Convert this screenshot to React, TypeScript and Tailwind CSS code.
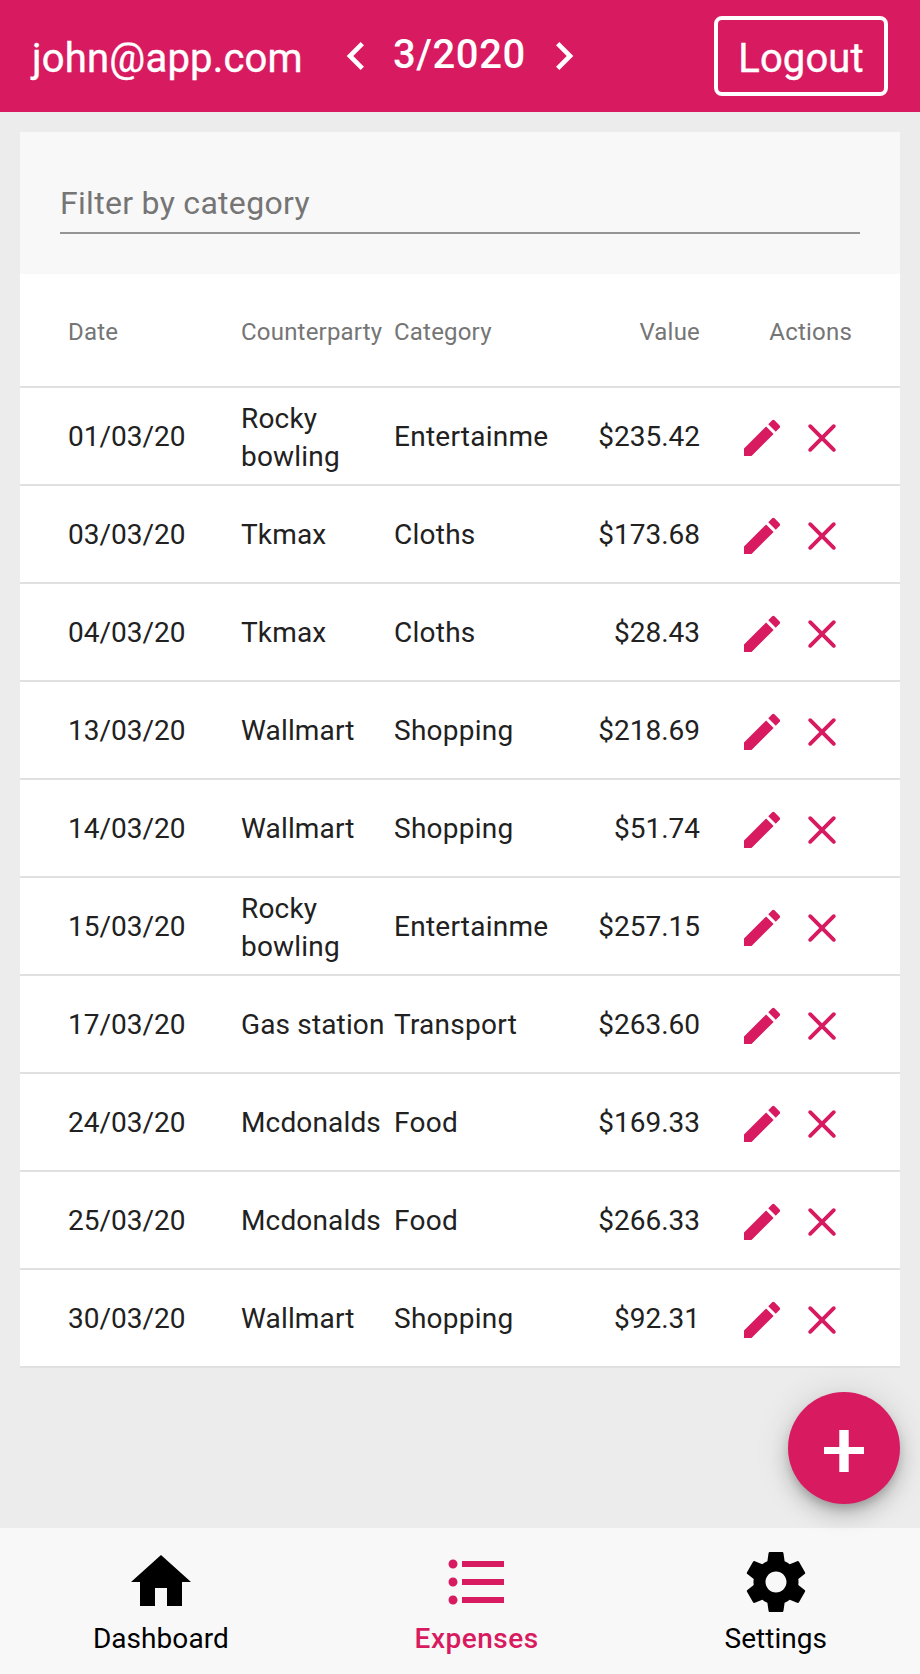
import { MdChevronLeft, MdChevronRight, MdEdit, MdHome, MdFormatListBulleted } from "react-icons/md";

const rows = [
  ["01/03/20", "Rocky bowling", "Entertainme", "$235.42"],
  ["03/03/20", "Tkmax", "Cloths", "$173.68"],
  ["04/03/20", "Tkmax", "Cloths", "$28.43"],
  ["13/03/20", "Wallmart", "Shopping", "$218.69"],
  ["14/03/20", "Wallmart", "Shopping", "$51.74"],
  ["15/03/20", "Rocky bowling", "Entertainme", "$257.15"],
  ["17/03/20", "Gas station", "Transport", "$263.60"],
  ["24/03/20", "Mcdonalds", "Food", "$169.33"],
  ["25/03/20", "Mcdonalds", "Food", "$266.33"],
  ["30/03/20", "Wallmart", "Shopping", "$92.31"],
];

function GearIcon({ className }: { className?: string }) {
  return (
    <svg viewBox="0 0 24 24" className={className} fill="currentColor">
      <path d="M19.43 12.98c.04-.32.07-.64.07-.98s-.03-.66-.07-.98l2.11-1.65c.19-.15.24-.42.12-.64l-2-3.46c-.12-.22-.39-.3-.61-.22l-2.49 1c-.52-.4-1.08-.73-1.69-.98l-.38-2.65C14.46 2.18 14.25 2 14 2h-4c-.25 0-.46.18-.49.42l-.38 2.65c-.61.25-1.17.59-1.69.98l-2.49-1c-.23-.09-.49 0-.61.22l-2 3.46c-.13.22-.07.49.12.64l2.11 1.65c-.04.32-.07.65-.07.98s.03.66.07.98l-2.11 1.65c-.19.15-.24.42-.12.64l2 3.46c.12.22.39.3.61.22l2.49-1c.52.4 1.08.73 1.69.98l.38 2.65c.03.24.24.42.49.42h4c.25 0 .46-.18.49-.42l.38-2.65c.61-.25 1.17-.59 1.69-.98l2.49 1c.23.09.49 0 .61-.22l2-3.46c.12-.22.07-.49-.12-.64l-2.11-1.65zM12 15.5c-1.93 0-3.5-1.57-3.5-3.5s1.57-3.5 3.5-3.5 3.5 1.57 3.5 3.5-1.57 3.5-3.5 3.5z" />
    </svg>
  );
}

const tabs = [
  { label: "Dashboard", Icon: MdHome, active: false },
  { label: "Expenses", Icon: MdFormatListBulleted, active: true },
  { label: "Settings", Icon: GearIcon, active: false },
];

function Header() {
  return (
    <header className="flex h-28 items-center bg-[#d81b60] pr-8 pl-8 text-[40px] leading-[48px] font-medium text-white">
      <span className="w-[272px] pt-1.5 font-normal tracking-[0.2px] [-webkit-text-stroke:0.4px_white]">john@app.com</span>
      <div className="ml-6 flex items-center">
        <MdChevronLeft className="size-14" />
        <span className="-mt-0.5 ml-[9px] w-[136px] tracking-[0.6px]">3/2020</span>
        <MdChevronRight className="ml-[7px] size-14" />
      </div>
      <button className="ml-auto flex h-20 w-[174px] items-center justify-center rounded-lg border-4 border-white pt-1.5 font-normal tracking-[0.1px] [-webkit-text-stroke:0.4px_white]">
        Logout
      </button>
    </header>
  );
}

function ExpensesTable() {
  return (
    <section>
      <div className="h-[142px] bg-[#f8f8f8] px-10 pt-12">
        <input
          className="block h-[54px] w-full border-b-2 border-[#949494] pt-1.5 pb-3 text-[32px] leading-[34px] tracking-[0.3px] outline-none placeholder:text-[#757575]"
          placeholder="Filter by category"
        />
      </div>
      <div className="flex h-[114px] items-center border-b-2 border-[#e0e0e0] bg-white px-12 pt-[3px] text-2xl tracking-[0.2px] text-[#757575]">
        <div className="w-[173px]">Date</div>
        <div className="w-[153px]">Counterparty</div>
        <div className="w-[153px]">Category</div>
        <div className="w-[153px] text-right">Value</div>
        <div className="flex-1 text-right">Actions</div>
      </div>
      {rows.map(([date, party, category, value]) => (
        <div
          key={date}
          className="flex h-[98px] items-center border-b-2 border-[#e0e0e0] bg-white pt-[3px] pl-12 text-[28px] leading-[38px] text-[#212121]"
        >
          <div className="w-[173px] pb-0.5">{date}</div>
          <div className={party === "Rocky bowling" ? "w-[153px] tracking-[0.2px]" : "w-[153px] pb-0.5 tracking-[0.15px]"}>{party}</div>
          <div className="w-[153px] pb-0.5 tracking-[0.25px]">{category}</div>
          <div className="w-[153px] pb-0.5 text-right">{value}</div>
          <div className="ml-[38px] flex gap-3 text-[#d81b60]">
            <MdEdit className="size-12" />
            <svg viewBox="0 0 48 48" className="size-12" fill="none" stroke="currentColor" strokeWidth="3.9" strokeLinecap="round">
              <path d="M12.2 12.2l23.6 23.6M35.8 12.2L12.2 35.8" />
            </svg>
          </div>
        </div>
      ))}
    </section>
  );
}

export default function App() {
  return (
    <div className="flex h-[1674px] w-[920px] flex-col bg-[#ececec] font-['Roboto',sans-serif]">
      <Header />
      <main className="flex flex-1 flex-col p-5 pb-6">
        <ExpensesTable />
        <button className="z-10 mt-auto flex size-28 items-center justify-center self-end rounded-full bg-[#d81b60] text-white shadow-[0_6px_10px_-2px_rgba(0,0,0,0.2),0_12px_20px_0_rgba(0,0,0,0.14),0_2px_36px_0_rgba(0,0,0,0.12)]">
          <svg viewBox="0 0 40 42" className="mt-[6px] h-[42px] w-10" fill="currentColor">
            <path d="M15.3 0h9.4v17H40v7H24.7v18h-9.4V24H0v-7h15.3z" />
          </svg>
        </button>
      </main>
      <nav className="flex h-[146px] justify-around bg-[#f8f8f8] pt-[18px] text-[28px] leading-[34px]">
        {tabs.map(({ label, Icon, active }) => (
          <div key={label} className={active ? "flex flex-col items-center font-medium tracking-[0.5px] text-[#d81b60]" : "flex flex-col items-center tracking-[0.05px] text-black"}>
            <Icon className="size-[72px]" />
            <span className="mt-1">{label}</span>
          </div>
        ))}
      </nav>
    </div>
  );
}
